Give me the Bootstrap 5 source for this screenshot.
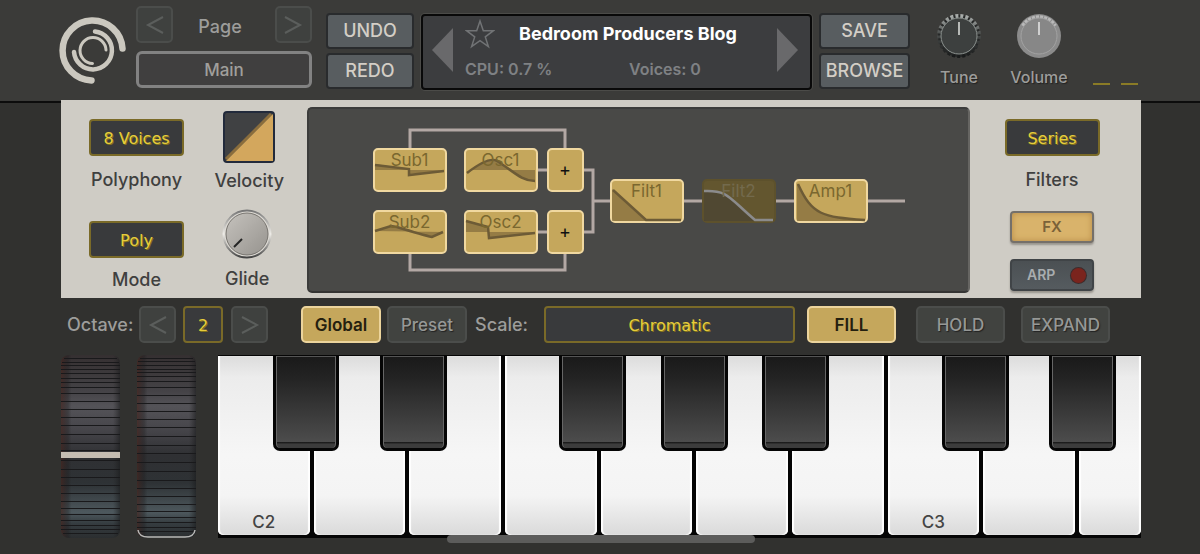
<!DOCTYPE html>
<html lang="en">
<head>
<meta charset="utf-8">
<meta name="viewport" content="width=device-width, initial-scale=1">
<title>Synth – Main page</title>
<link href="https://cdn.jsdelivr.net/npm/bootstrap@5.3.0/dist/css/bootstrap.min.css" rel="stylesheet">
<style>
:root{--gold:#c5a75c;--gold-edge:#f0d8a0;--ink:#393a3c;--line:#7a6a28;--yellow:#e6cd3c;--left:calc(5% + 1px);--right:calc(5% - 1px)}
body{background:#31312f;color:#9d9d9b;font:500 18px/24px Inter,"Liberation Sans",sans-serif;min-width:1100px}
button,select{font:inherit;padding:0;cursor:pointer}
svg{display:block}

/* header */
.topbar{background:#3b3b39;border-bottom:2px solid #0c0c0c;height:103px;padding:6px var(--right) 0 5%}
.logo{width:68px;height:68px;margin:11px 9px 0 -1px}
.pager{width:176px}
.ghost{width:37px;height:37px;border:2px solid #4b4d4b;border-radius:5px;background:#3f413f;color:#5b5e5c;display:grid;place-items:center}
.page-pick{height:37px;border:3px solid #828282;border-radius:6px;background:#403f3f;color:#a09f9c;font-size:17px}
.slate{height:36px;border:2px solid #292b2d;border-radius:4px;background:#585d60;color:#d3cec6}
.undo-col{width:88px;margin:7px 7px 0 14px}
.save-col{width:91px;margin:7px 0 0 7px}
.screen{height:76px;margin-top:8px;border:2px solid #090909;border-radius:4px;background:#3c3d3f;box-shadow:0 0 0 1px #4b4b48;padding:0 12px 4px 9px}
.bare{border:0;background:none;color:#717375}
.screen-text{font-size:16px;font-weight:600;color:#7f8184}
.screen-title{font-size:18px;font-weight:700;color:#fff}
.knob-col{margin-top:7px;font-size:16px}
.tune-col{margin-left:27px;width:44px}
.volume-col{margin-left:29px;width:58px}
.knob-col span{white-space:nowrap;margin-top:6px;text-shadow:1px 1px 1px #222}
.meter{margin:77px 3px 0 25px;gap:11px}
.meter i{width:17px;height:2px;background:#8a7b26}
.turn{position:relative;display:block}
.turn input{position:absolute;inset:0;width:100%;height:100%;margin:0;opacity:0;cursor:pointer}

/* control panel */
.stage{margin:-3px var(--right) 0 var(--left);position:relative}
.panel{background:#cfccc5;color:#40403f;height:198px}
.pair{padding:11px 23px 0 28px;width:246px}
.lcd{width:95px;height:37px;border:2px solid var(--line);border-radius:4px;background:var(--ink);color:var(--yellow);font:500 16px/24px "DejaVu Sans","Open Sans",sans-serif;text-shadow:1px 1px 0 #83721c;padding-top:2px}
select{appearance:none;text-align:center;text-align-last:center}
.cell-a{height:86px}
.cell-b{height:90px}
.lcd-cell{padding-top:8px}
.lcd-cell label,.filters label{padding-top:4px}
.cell-b.lcd-cell label{padding-top:2px}
.pair label,.filters label{white-space:nowrap}
.vel-text{padding-top:6px}
.board{margin:7px 0 5px;border-radius:5px;background:#494947;border:2px solid #3c3c3b;border-right-color:#666562;border-bottom-color:#353534}
.filters{width:171px;padding:19px 7px 0 0}
.soft{width:84px;height:32px;border:2px solid #75706a;border-radius:4px;font-size:15px;line-height:20px;font-weight:600;box-shadow:0 2px 2px #99958e}
.fx{background:#d9b36b;color:#7a6239;margin-top:19px;box-shadow:inset 0 0 6px #b88c48,0 2px 2px #99958e}
.arp{background:linear-gradient(#4b5053,#555b5f);color:#a9adaf;border-color:#404447;font-size:14px;padding:0 6px 0 15px}
.led{width:15px;height:15px;border-radius:50%;background:#7a241d;box-shadow:0 0 0 1px #3c2c2c}

/* routing diagram: nodes are placed on a free canvas */
.routing{position:relative;width:532px;height:144px}
.node{position:absolute;width:74px;height:44px;border:2px solid var(--gold-edge);border-radius:5px;background:var(--gold);color:#7a672f;font-size:17px;font-weight:400;line-height:20px;display:flex;justify-content:center}
.node span{position:relative}
.node svg{position:absolute;inset:-2px auto auto -2px}
.node .area{fill:#5b4a2b;fill-opacity:.45}
.node .curve{fill:none;stroke:#6d5b36;stroke-width:2.5}
.mix{width:37px;color:#111;align-items:center;font-size:18px}
.off{background:#63562f;border-color:#5d512c;color:#736a4d}
.off .area{fill:#443f35;fill-opacity:.6}
.off .curve{stroke:#8b8b8c}

/* strip above the keys */
.strip{height:57px;padding:8px 31px 0 6px}
.strip>*{flex:none;height:37px;white-space:nowrap}
.strip>label{line-height:38px}
.oct-label{width:72px}
.oct-value{width:40px;margin:0 8px 0 7px}
.tab-btn{border:2px solid #4b4d4b;border-radius:5px;background:#414340;color:#969896;font-size:17px;text-shadow:1px 1px 1px #222}
.tab-btn.on{background:var(--gold);border-color:#ecd49c;color:#24200f;text-shadow:none;font-weight:600}
.tab-mid{width:80px;margin-left:6px}
.tab-mid.on{margin-left:33px}
.scale{margin:0 12px 0 16px}
.tab-end{width:89px;margin-left:16px}
.tab-end.on{margin:0 4px 0 0}

/* wheels and keyboard */
.wheel{width:59px;height:183px}
.wheel+.wheel{margin-left:17px}
.ridges{stroke:#19191b;shape-rendering:crispEdges}
.keys{background:#050505;height:183px;margin-left:22px;padding:1px 0 3px;overflow:hidden;font-size:17px}
.slot{position:relative;flex:956 1 0;padding-right:4px}
.slot:last-child{flex-grow:648;padding-right:0}
.ivory{width:100%;height:179px;border:0;border-radius:0 0 5px 5px;background:linear-gradient(#dcdcdc,#ececec 12%,#f6f6f6 55%,#f4f4f4 78%,#dadada);box-shadow:inset 2px 0 1px #fff,inset -2px 0 1px #fff;color:#444;display:flex;align-items:end;justify-content:center;padding-bottom:1px}
.ebony{position:absolute;z-index:1;top:0;width:70%;height:95px;border:solid #050505;border-width:0 3px 3px;border-radius:0 0 7px 7px;background:linear-gradient(#191919,#242424 25%,#4c4c4c 93%,#1c1c1c 94%,#3c3c3c 96%);box-shadow:inset 1px 0 #666,inset -1px 0 #666,inset 0 1px #555}
.flat-side{right:-27%}.mid-side{right:-33%}.sharp-side{right:-39%}
.home-bar{position:relative;z-index:2;width:308px;height:8px;margin:-3px auto 0;border-radius:4px;background:#5c5c5b}
</style>
</head>
<body>
<header class="topbar d-flex align-items-start">
  <svg class="logo flex-shrink-0" viewBox="0 0 68 68" fill="none" stroke="#cbc8bf" stroke-linecap="round" aria-label="Logo">
    <path d="M32.500 63.500A30 30 0 1 1 63.500 31.500" stroke-width="6.500"/>
    <path d="M15 35A19 19 0 1 0 36 14.500" stroke-width="4.500"/>
    <path d="M33.500 46.500A13 13 0 1 1 47 33" stroke-width="3"/>
  </svg>
  <div class="pager flex-shrink-0">
    <div class="d-flex justify-content-between align-items-center">
      <button class="ghost" aria-label="Previous page"><svg width="20" height="20" fill="none" stroke="currentColor" stroke-width="2"><path d="M18 2 3 10l15 8"/></svg></button>
      <span class="pt-1 pe-2">Page</span>
      <button class="ghost" aria-label="Next page"><svg width="20" height="20" fill="none" stroke="currentColor" stroke-width="2"><path d="m2 2 15 8-15 8"/></svg></button>
    </div>
    <select class="page-pick w-100 mt-2 d-block" aria-label="Page"><option>Main</option></select>
  </div>
  <div class="undo-col d-grid gap-1 flex-shrink-0">
    <button class="slate">UNDO</button>
    <button class="slate">REDO</button>
  </div>
  <div class="screen flex-grow-1 d-flex align-items-center">
    <button class="bare" aria-label="Previous preset"><svg width="21" height="44" fill="#69696b"><path d="M21 0v44L0 22z"/></svg></button>
    <div class="screen-text flex-grow-1 ps-2 ms-1">
      <div class="d-flex align-items-center">
        <button class="bare" aria-label="Favourite"><svg width="30" height="30" viewBox="0 0 30 30" fill="none" stroke="currentColor" stroke-width="1.500"><path d="m15 2 3.300 9.700h10.200l-8.200 6.200 3.100 9.800-8.400-6-8.400 6 3.100-9.800-8.200-6.200h10.200z"/></svg></button>
        <span class="screen-title ps-3 ms-2">Bedroom Producers Blog</span>
      </div>
      <div class="d-flex pt-2">
        <span class="col-6">CPU: 0.7 %</span><span class="ps-2">Voices: 0</span>
      </div>
    </div>
    <button class="bare" aria-label="Next preset"><svg width="21" height="44" fill="#69696b"><path d="M0 0v44l21-22z"/></svg></button>
  </div>
  <div class="save-col d-grid gap-1 flex-shrink-0">
    <button class="slate">SAVE</button>
    <button class="slate">BROWSE</button>
  </div>
  <label class="knob-col tune-col d-flex flex-column align-items-center">
    <div class="turn"><svg width="46" height="46" viewBox="0 0 46 46">
      <defs><linearGradient id="rim" x2="0" y2="1"><stop stop-color="#a9adab"/><stop offset=".45" stop-color="#4a4d4c"/><stop offset="1" stop-color="#191b1b"/></linearGradient></defs>
      <circle cx="23" cy="23" r="21" fill="#252727"/>
      <circle cx="23" cy="23" r="20" fill="none" stroke="url(#rim)" stroke-width="4" stroke-dasharray="3 2"/>
      <circle cx="23" cy="23" r="18" fill="#3d403f" stroke="#8b918e"/>
      <path d="M23 9v13" stroke="#b7bab7" stroke-width="2"/></svg>
      <input type="range" aria-label="Tune"></div>
    <span>Tune</span>
  </label>
  <label class="knob-col volume-col d-flex flex-column align-items-center">
    <div class="turn"><svg width="46" height="46" viewBox="0 0 46 46">
      <circle cx="23" cy="23" r="22" fill="#8b8b8b"/>
      <path d="M7 13A19 19 0 0 1 39 13" fill="none" stroke="#b9b9b9" stroke-width="4" stroke-dasharray="3 1"/>
      <circle cx="23" cy="23" r="18" fill="#878787" stroke="#a2a2a2"/>
      <path d="M23 9v13" stroke="#d0d0d0" stroke-width="2"/></svg>
      <input type="range" aria-label="Volume"></div>
    <span>Volume</span>
  </label>
  <div class="meter d-flex"><i></i><i></i></div>
</header>

<main class="stage">
  <section class="panel d-flex">
    <div class="pair d-flex justify-content-between flex-shrink-0 text-center">
      <div>
        <div class="cell-a lcd-cell mb-3"><select id="poly" class="lcd d-block mb-2"><option>8 Voices</option></select><label for="poly">Polyphony</label></div>
        <div class="cell-b lcd-cell"><select id="mode" class="lcd d-block mb-2"><option>Poly</option></select><label for="mode">Mode</label></div>
      </div>
      <div class="d-flex flex-column align-items-center">
        <label class="cell-a mb-2"><div class="turn"><svg class="mx-auto" width="52" height="52" viewBox="0 0 52 52"><rect x="1" y="1" width="50" height="50" rx="3" fill="#404143" stroke="#222a3b" stroke-width="2"/><path d="M3 48 48 3" stroke="#8a6d3c" stroke-width="3"/><path d="M3 50 50 3v47z" fill="#d3a75d"/></svg><input type="range" aria-label="Velocity"></div><span class="vel-text d-block">Velocity</span></label>
        <label class="cell-b pe-1"><div class="turn mt-1"><svg class="mx-auto" width="50" height="50" viewBox="0 0 50 50">
          <defs><linearGradient id="face" x2="1" y2="1"><stop stop-color="#c5c2bd"/><stop offset="1" stop-color="#96938e"/></linearGradient><linearGradient id="ring" x2="0" y2="1"><stop stop-color="#777"/><stop offset=".5" stop-color="#efede8"/><stop offset="1" stop-color="#444"/></linearGradient></defs>
          <circle cx="25" cy="25" r="23.500" fill="#dedbd5" stroke="url(#ring)" stroke-width="2"/><circle cx="25" cy="25" r="21" fill="url(#face)" stroke="#77746f"/><path d="m12 38 8-8" stroke="#242424" stroke-width="2"/></svg><input type="range" aria-label="Glide"></div><span class="d-block pt-2">Glide</span></label>
      </div>
    </div>
    <div class="board flex-grow-1 d-flex align-items-center justify-content-center">
      <div class="routing">
        <svg width="532" height="144" fill="none" stroke="#b3a8a4" stroke-width="3"><path d="M37 20V2H192V20M37 124v18H192v-18M164 42h12M164 104h12M210 42h10v62h-10M220 73h18M310 73h20M403 73h20M494 73h38"/></svg>
        <button class="node" style="left:0;top:20px"><svg width="74" height="44"><path class="area" d="M2 16 36 21V26L71 23V22H2z"/><path class="curve" d="M2 17 36 21V27L71 23"/></svg><span>Sub1</span></button>
        <button class="node" style="left:91px;top:20px"><svg width="74" height="44"><path class="area" d="M3 25Q25 8 33 13C48 22 57 33 71 33V22H6z"/><path class="curve" d="M3 25Q25 8 33 13C48 22 57 33 71 33"/></svg><span>Osc1</span></button>
        <button class="node mix" style="left:174px;top:20px" aria-label="Mix 1">+</button>
        <button class="node" style="left:0;top:82px"><svg width="74" height="44"><path class="area" d="M2 21 18 16 24 17 59 27 70 22z"/><path class="curve" d="M2 21 18 16 24 17Q50 25 59 27L70 22"/></svg><span>Sub2</span></button>
        <button class="node" style="left:91px;top:82px"><svg width="74" height="44"><path class="area" d="M2 11 24 17 25 28 71 23V22H2z"/><path class="curve" d="M2 11 24 17 25 28 71 23"/></svg><span>Osc2</span></button>
        <button class="node mix" style="left:174px;top:82px" aria-label="Mix 2">+</button>
        <button class="node" style="left:237px;top:51px"><svg width="74" height="44"><path class="area" d="M2 10 36 42H2z"/><path class="curve" d="M3 11 36 41H71"/></svg><span>Filt1</span></button>
        <button class="node off" style="left:329px;top:51px"><svg width="74" height="44"><path class="area" d="M2 12C26 11 26 18 53 42H2z"/><path class="curve" d="M2 12C26 11 26 18 53 41H71"/></svg><span>Filt2</span></button>
        <button class="node" style="left:421px;top:51px"><svg width="74" height="44"><path class="area" d="M3 4C18 36 28 38 70 42H3z"/><path class="curve" d="M4 5C18 36 28 38 71 41"/></svg><span>Amp1</span></button>
      </div>
    </div>
    <div class="filters d-flex flex-column align-items-center flex-shrink-0">
      <div class="text-center"><select id="filt" class="lcd d-block mb-2"><option>Series</option></select><label for="filt">Filters</label></div>
      <button class="soft fx">FX</button>
      <button class="soft arp mt-3 d-flex align-items-center justify-content-between"><span>ARP</span><i class="led"></i></button>
    </div>
  </section>

  <section class="strip d-flex">
    <label class="oct-label" for="oct">Octave:</label>
    <button class="ghost" aria-label="Octave down"><svg width="20" height="20" fill="none" stroke="currentColor" stroke-width="2"><path d="M18 2 3 10l15 8"/></svg></button>
    <select id="oct" class="lcd oct-value"><option>2</option></select>
    <button class="ghost" aria-label="Octave up"><svg width="20" height="20" fill="none" stroke="currentColor" stroke-width="2"><path d="m2 2 15 8-15 8"/></svg></button>
    <button class="tab-btn on tab-mid">Global</button>
    <button class="tab-btn tab-mid">Preset</button>
    <label class="ms-2" for="scale">Scale:</label>
    <select id="scale" class="lcd scale flex-fill"><option>Chromatic</option></select>
    <button class="tab-btn on tab-end">FILL</button>
    <button class="tab-btn tab-end">HOLD</button>
    <button class="tab-btn tab-end">EXPAND</button>
  </section>

  <section class="d-flex">
    <div class="turn wheel flex-shrink-0">
      <svg width="59" height="183" viewBox="0 0 59 183">
        <defs>
          <linearGradient id="roll" x2="0" y2="1"><stop stop-color="#353031"/><stop offset=".2" stop-color="#454347"/><stop offset=".28" stop-color="#545358"/><stop offset=".4" stop-color="#47464b"/><stop offset=".55" stop-color="#2f3033"/><stop offset=".7" stop-color="#2e3235"/><stop offset=".86" stop-color="#4d585d"/><stop offset=".92" stop-color="#353c40"/><stop offset="1" stop-color="#2b2e30"/></linearGradient>
          <linearGradient id="side"><stop stop-color="#45241d" stop-opacity=".7"/><stop offset=".12" stop-color="#1e1a1b" stop-opacity=".35"/><stop offset=".18" stop-color="#222" stop-opacity="0"/><stop offset=".88" stop-color="#222" stop-opacity="0"/><stop offset="1" stop-color="#18191a" stop-opacity=".6"/></linearGradient>
        </defs>
        <rect width="59" height="183" rx="8" fill="url(#roll)"/><rect width="59" height="183" rx="8" fill="url(#side)"/>
        <path class="ridges" d="M3 3H56M1 7H58M0 10H59M0 14H59M0 18H59M0 23H59M0 27H59M0 32H59M0 38H59M0 46H59M0 54H59M0 62H59M0 70H59M0 79H59M0 88H59M0 95H59M0 105H59M0 114H59M0 122H59M0 130H59M0 138H59M0 146H59M0 153H59M0 159H59M0 165H59M0 170H59M0 174H59M2 178H57"/>
        <path d="M0 100H59" stroke="#c5bdb2" stroke-width="6"/>
      </svg><input type="range" aria-label="Pitch wheel">
    </div>
    <div class="turn wheel flex-shrink-0">
      <svg width="59" height="183" viewBox="0 0 59 183">
        <rect width="59" height="183" rx="8" fill="url(#roll)"/><rect width="59" height="183" rx="8" fill="url(#side)"/>
        <path class="ridges" d="M3 3H56M1 6H58M0 10H59M0 14H59M0 17H59M0 21H59M0 26H59M0 32H59M0 40H59M0 48H59M0 56H59M0 64H59M0 72H59M0 81H59M0 90H59M0 98H59M0 107H59M0 116H59M0 125H59M0 133H59M0 141H59M0 149H59M0 156H59M0 162H59M0 167H59M0 172H59M1 176H58"/>
        <path d="M1 175Q2 182 11 182H48Q57 182 58 175" fill="none" stroke="#b9b9b7" stroke-width="1.500"/>
      </svg><input type="range" aria-label="Mod wheel">
    </div>
    <div class="keys d-flex flex-grow-1">
      <div class="slot"><button class="ivory">C2</button><button class="ebony flat-side" aria-label="C sharp 2"></button></div>
      <div class="slot"><button class="ivory" aria-label="D2"></button><button class="ebony sharp-side" aria-label="D sharp 2"></button></div>
      <div class="slot"><button class="ivory" aria-label="E2"></button></div>
      <div class="slot"><button class="ivory" aria-label="F2"></button><button class="ebony flat-side" aria-label="F sharp 2"></button></div>
      <div class="slot"><button class="ivory" aria-label="G2"></button><button class="ebony mid-side" aria-label="G sharp 2"></button></div>
      <div class="slot"><button class="ivory" aria-label="A2"></button><button class="ebony sharp-side" aria-label="A sharp 2"></button></div>
      <div class="slot"><button class="ivory" aria-label="B2"></button></div>
      <div class="slot"><button class="ivory">C3</button><button class="ebony flat-side" aria-label="C sharp 3"></button></div>
      <div class="slot"><button class="ivory" aria-label="D3"></button><button class="ebony sharp-side" aria-label="D sharp 3"></button></div>
      <div class="slot"><button class="ivory" aria-label="E3"></button></div>
    </div>
  </section>
  <div class="home-bar"></div>
</main>
<script src="https://cdn.jsdelivr.net/npm/bootstrap@5.3.0/dist/js/bootstrap.bundle.min.js"></script>
</body>
</html>
